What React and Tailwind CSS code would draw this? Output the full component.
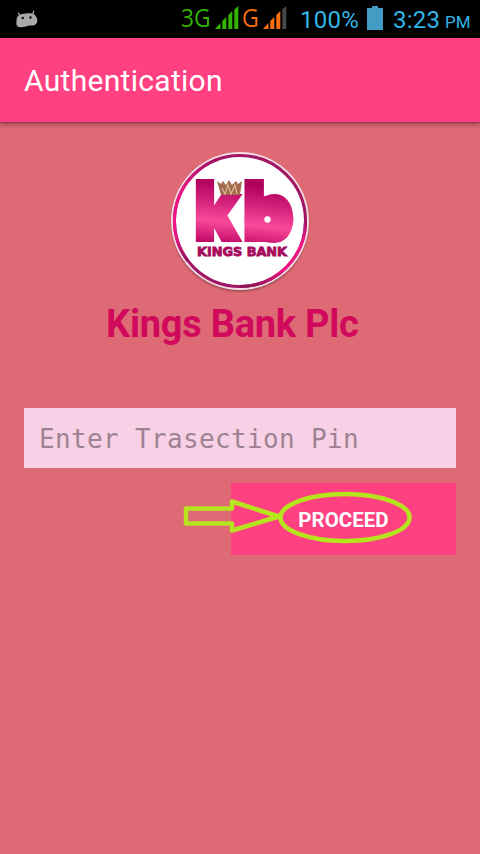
function AndroidIcon() {
  return (
    <svg width="24" height="20" viewBox="0 0 24 20" fill="#a9a9a9">
      <path d="M3.300 3.500 L5 7 M18.700 1.700 L17.800 6" stroke="#a9a9a9" strokeWidth="1.300" />
      <path d="M1.500 12 C1.500 7 4 5.200 9 4.700 C12 4 18 3.500 20 6 C22.500 9 23 12 21.500 14.500 C19.500 17 17 16.500 14 16.500 C10 18 5 19 2.500 17.500 C1 16 1.300 13 1.500 12 Z" />
      <circle cx="7.800" cy="9" r="1.200" fill="#111" />
      <circle cx="15.500" cy="8.500" r="1.200" fill="#111" />
    </svg>
  );
}

function Signal({ color, last }) {
  return (
    <svg width="24" height="24" viewBox="0 0 24 24" fill={color}>
      <path d="M0 23 L5.500 17 V23 Z" />
      <path d="M7.300 15 L11.300 11 V23 H7.300 Z" />
      <path d="M13.300 9 L17.300 5 V23 H13.300 Z" />
      <path d="M19.300 3.500 L23.300 0 V23 H19.300 Z" fill={last} />
    </svg>
  );
}

function StatusBar() {
  return (
    <div className="flex h-[38px] bg-black text-[#33b5e5]">
      <div className="ml-[15px] mt-[9px] w-[24px]">
        <AndroidIcon />
      </div>
      <div className="ml-[142px] h-[38px] w-[34px] whitespace-nowrap font-['Open_Sans'] text-[26px] leading-[35px] text-[#33b500]">
        <span className="inline-block origin-left scale-x-[0.88]">3G</span>
      </div>
      <div className="mt-[6px] w-[24px]">
        <Signal color="#33b500" last="#33b500" />
      </div>
      <div className="ml-[3px] w-[21px] font-['Open_Sans'] text-[26px] leading-[35px] text-[#ff6f0f]">
        <span className="inline-block origin-left scale-x-[0.9]">G</span>
      </div>
      <div className="mt-[6px] w-[24px]">
        <Signal color="#ff6f0f" last="#474747" />
      </div>
      <div className="ml-[13px] w-[67px] whitespace-nowrap text-[24px] leading-[40px] tracking-[0.3px]">100%</div>
      <svg className="mt-[6px]" width="16" height="24" viewBox="0 0 16 24" fill="#429cc4">
        <path d="M5 0 H11 V2 H16 V24 H0 V2 H5 Z" />
      </svg>
      <div className="ml-[10px] w-[52px] whitespace-nowrap text-[24px] leading-[40px] tracking-[0.2px]">3:23</div>
      <div className="whitespace-nowrap text-[17px] leading-[44px]">PM</div>
    </div>
  );
}

function Logo() {
  return (
    <svg width="144" height="146" viewBox="168 149 144 146">
      <defs>
        <linearGradient id="metal" x1="200" y1="179" x2="193" y2="243" gradientUnits="userSpaceOnUse">
          <stop offset="0" stopColor="#b0005c" />
          <stop offset="0.350" stopColor="#d8257f" />
          <stop offset="0.620" stopColor="#fb4a9c" />
          <stop offset="1" stopColor="#b8005f" />
        </linearGradient>
        <linearGradient id="arc" x1="0" y1="0" x2="0" y2="1">
          <stop offset="0" stopColor="#a01565" />
          <stop offset="0.300" stopColor="#f01585" />
          <stop offset="0.750" stopColor="#f01585" />
          <stop offset="1" stopColor="#8e1458" />
        </linearGradient>
        <filter id="shade" x="-10%" y="-10%" width="120%" height="120%">
          <feGaussianBlur stdDeviation="1.300" />
        </filter>
      </defs>
      <circle cx="240" cy="223" r="68.500" fill="#7c3a42" opacity="0.700" filter="url(#shade)" />
      <circle cx="240" cy="221" r="69" fill="#f3dce2" />
      <circle cx="240" cy="221" r="65.500" fill="#fff" stroke="#a01565" strokeWidth="3" />
      <path d="M218 159.300 A65.500 65.500 0 0 0 188 261" fill="none" stroke="url(#arc)" strokeWidth="3" />
      <path d="M305.500 221 A65.500 65.500 0 0 1 240 286.500" fill="none" stroke="url(#arc)" strokeWidth="3" />
      <g fill="url(#metal)" stroke="url(#metal)" strokeWidth="4" fontFamily="Inter" fontWeight="900" fontSize="80.500">
        <text x="194" y="240" textLength="45" lengthAdjust="spacingAndGlyphs">k</text>
        <text x="242.500" y="240" textLength="51" lengthAdjust="spacingAndGlyphs">b</text>
      </g>
      <ellipse cx="269" cy="219" rx="24.500" ry="23.500" fill="url(#metal)" />
      <circle cx="267.500" cy="219.500" r="3.200" fill="#fff" />
      <path d="M217 181 L221 184 L223 181 L226 185 L229 180 L232 185 L236 181 L238 184 L242 181 L240 195 H221 Z" fill="#a26a50" />
      <path d="M222 188 L225 194 L228 185 L231 194 L235 185 L237 194" stroke="#dfb890" strokeWidth="1.200" fill="none" />
      <text x="197" y="256" fill="#a60a5d" stroke="#a60a5d" strokeWidth="0.900" fontFamily="DejaVu Sans" fontWeight="700" fontSize="13" textLength="90" lengthAdjust="spacingAndGlyphs">KINGS BANK</text>
    </svg>
  );
}

function Pointer() {
  return (
    <svg className="pointer-events-none absolute left-[-48px] top-[7px]" width="232" height="56" viewBox="183 490 232 56" fill="none" stroke="#b5e61d" strokeWidth="4.500" strokeLinejoin="round">
      <path d="M186 508.500 H232 V501.500 L279 516.500 L232 530.500 V523.500 H186 Z" />
      <ellipse cx="345" cy="517.500" rx="64.500" ry="23.500" />
    </svg>
  );
}

export default function App() {
  return (
    <div className="flex h-[854px] w-[480px] flex-col overflow-hidden bg-[#de6a75] font-[Roboto,sans-serif]">
      <StatusBar />
      <header className="h-[85px] shrink-0 border-b border-[#8c3a48] bg-[#ff4081] pl-[24px] shadow-[0_1px_5px_rgba(70,20,30,0.5)]">
        <h1 className="whitespace-nowrap text-[30px] leading-[85px] tracking-[0.3px] text-white">Authentication</h1>
      </header>
      <main className="flex flex-col px-[24px] pt-[26px]">
        <div className="self-center">
          <Logo />
        </div>
        <h2 className="ml-[82px] mt-[9px] h-[40px] whitespace-nowrap text-[38px] font-bold leading-[40px] tracking-[-0.25px] text-[#d1095c]">Kings Bank Plc</h2>
        <input
          className="mt-[64px] h-[60px] w-full bg-[#f9d1e6] px-[15px] pt-[2px] font-['DejaVu_Sans_Mono',monospace] text-[26px] tracking-[0.35px] placeholder:text-[#9d8391] placeholder:opacity-100"
          placeholder="Enter Trasection Pin"
        />
        <div className="relative mt-[15px] h-[72px] w-[225px] self-end">
          <button className="h-full w-full whitespace-nowrap bg-[#ff4081] pt-[2px] text-[20.5px] font-bold leading-[70px] text-white">PROCEED</button>
          <Pointer />
        </div>
      </main>
    </div>
  );
}
